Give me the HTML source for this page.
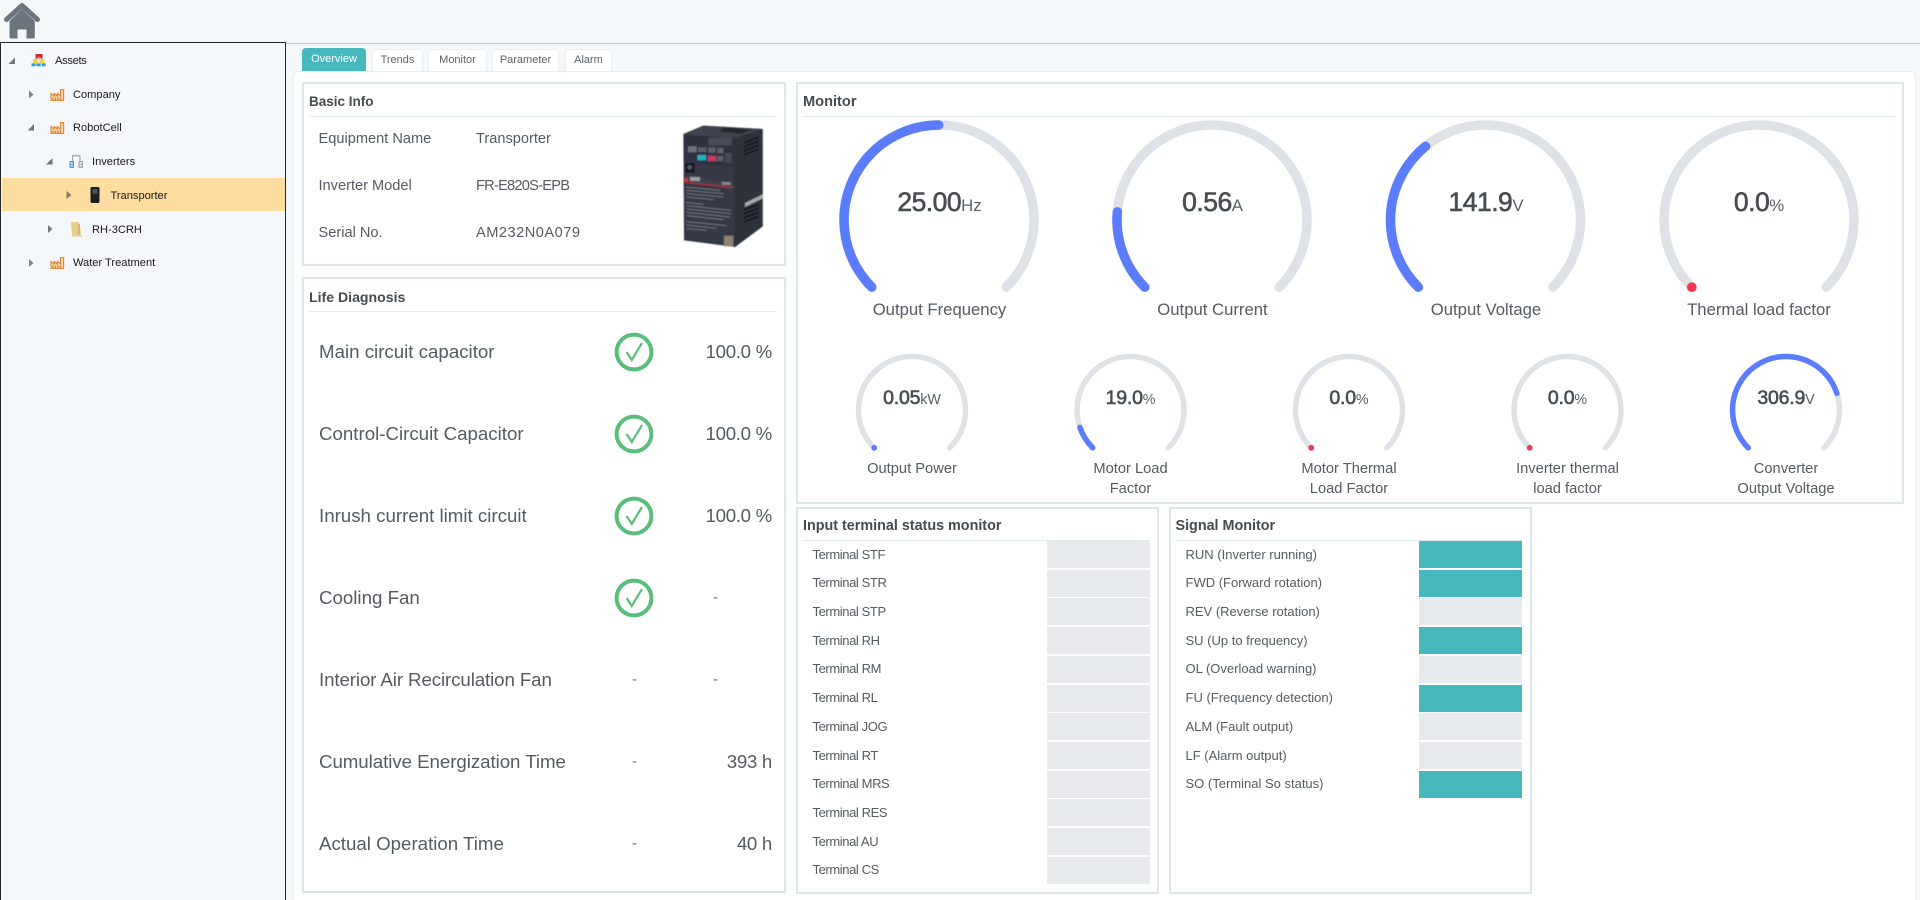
<!DOCTYPE html>
<html lang="en">
<head>
<meta charset="utf-8">
<title>Transporter Overview</title>
<style>
html,body{margin:0;padding:0;width:1920px;height:900px;overflow:hidden;background:#f5f8fb;font-family:"Liberation Sans","DejaVu Sans",sans-serif;color:#4f555b}
.a{position:absolute}
.t{position:absolute;white-space:nowrap;line-height:20px;height:20px}
.panel{position:absolute;box-sizing:border-box;border:2px solid #dce7ea;background:#fff}
.h{position:absolute;white-space:nowrap;font-size:14.1px;font-weight:bold;line-height:20px;height:20px;color:#464b50}
.ln{position:absolute;height:1.5px;background:#e2eaed}
.tree{font-size:11.1px;color:#1a1a1a}
.tab{position:absolute;box-sizing:border-box;top:49px;height:22px;background:#fff;border:1px solid #e8edf0;border-bottom:none;border-radius:4px 4px 0 0;font-size:11px;line-height:21px;text-align:center;color:#5b6167}
.tab.on{background:#48b8bf;border-color:#48b8bf;color:#fff;top:48px;height:23px}
.inf{font-size:14.6px;color:#555b62}
.ld{font-size:18.7px;color:#555b62}
.r{text-align:right;left:640px;width:132px;letter-spacing:-.3px}
.dash{font-size:15px;color:#666c72}
.tl{font-size:13px;color:#555b62}
.tm{letter-spacing:-.4px}
.c{position:absolute;height:27px;width:103px;background:#e7ebed}
.c.g{background:#48b8bf}
.v{position:absolute;width:240px;text-align:center;white-space:nowrap;color:#484d53}
.v b{font-weight:normal;-webkit-text-stroke:.6px #484d53}
.v i{font-style:normal;color:#5a6066}
.v.big{line-height:32px;height:32px;top:186px}
.v.big b{font-size:26.5px;letter-spacing:-.5px}
.v.big i{font-size:16.8px}
.v.sm{line-height:26px;height:26px;top:385px}
.v.sm b{font-size:19.5px;letter-spacing:-.2px}
.v.sm i{font-size:14.3px}
.gl{position:absolute;text-align:center;white-space:nowrap;color:#555b62}
.gl.big{font-size:16.7px;line-height:20px;width:260px;top:300px}
.gl.sm{font-size:14.7px;line-height:20px;width:200px;top:459px}
</style>
</head>
<body>

<!-- home icon -->
<svg class="a" style="left:0;top:0" width="48" height="42" viewBox="0 0 48 42">
<path d="M6.5 19.5 L22 5.5 L37.5 19.5" fill="none" stroke="#6c747d" stroke-width="5" stroke-linecap="round" stroke-linejoin="round"/>
<path d="M9.5 21 L22 9 L34.8 21 V37 Q34.8 38.5 33.3 38.5 H26.5 V29.5 H17.5 V38.5 H11 Q9.5 38.5 9.5 37 Z" fill="#6c747d"/>
</svg>

<!-- top rule -->
<div class="a" style="left:285px;top:42.5px;width:1635px;height:1px;background:#c6ccd1"></div>

<!-- tree -->
<div class="a" style="left:0;top:42px;width:286px;height:858px;box-sizing:border-box;border:1.5px solid #23272b;border-bottom:none;background:#f5f8fb"></div>
<div class="a" style="left:1.5px;top:178px;width:283px;height:33px;background:#fcdc9f"></div>

<svg class="a" style="left:0;top:42px" width="120" height="235" viewBox="0 42 120 235">
<!-- arrows -->
<path d="M15 57.5 V64 H8.5 Z" fill="#6f767c"/>
<path d="M29 90.5 L33.5 94.5 L29 98.5 Z" fill="#7b8288"/>
<path d="M34 124 V130.5 H27.5 Z" fill="#6f767c"/>
<path d="M52.5 158 V164.5 H46 Z" fill="#6f767c"/>
<path d="M66.5 191 L71.5 195 L66.5 199 Z" fill="#8b7a66"/>
<path d="M48 225 L52.5 229 L48 233 Z" fill="#6f7b88"/>
<path d="M29 259 L33.5 263 L29 267 Z" fill="#7b8288"/>
<!-- assets icon -->
<rect x="35.5" y="54" width="7" height="4.5" fill="#d7262e"/>
<path d="M39 57 L34 60 M39 57 L44 60" stroke="#9aa0a6" stroke-width="1" fill="none"/>
<rect x="33" y="59" width="5" height="4" fill="#f0d232"/>
<rect x="39.5" y="59" width="5" height="4" fill="#f0d232"/>
<rect x="31.5" y="63.3" width="4.2" height="3" fill="#2e9fd6"/>
<rect x="36.5" y="63.3" width="4.2" height="3" fill="#2e9fd6"/>
<rect x="41.5" y="63.3" width="4.2" height="3" fill="#2e9fd6"/>
</svg>

<!-- factory icons -->
<svg class="a" style="left:50px;top:89px" width="15" height="12" viewBox="0 0 15 12"><path d="M1 11.5 V4.5 L4.2 7 V4.5 L7.4 7 V4.5 L10.6 7 V.5 H13.6 V11.5 Z" fill="#f6d7ae" stroke="#df8a3d" stroke-width="1.2"/><path d="M3 8.5v2.5M5.5 8.5v2.5M8 8.5v2.5M10.5 8.5v2.5" stroke="#d97c2d" stroke-width="1.2"/></svg>
<svg class="a" style="left:50px;top:122px" width="15" height="12" viewBox="0 0 15 12"><path d="M1 11.5 V4.5 L4.2 7 V4.5 L7.4 7 V4.5 L10.6 7 V.5 H13.6 V11.5 Z" fill="#f6d7ae" stroke="#df8a3d" stroke-width="1.2"/><path d="M3 8.5v2.5M5.5 8.5v2.5M8 8.5v2.5M10.5 8.5v2.5" stroke="#d97c2d" stroke-width="1.2"/></svg>
<svg class="a" style="left:50px;top:257px" width="15" height="12" viewBox="0 0 15 12"><path d="M1 11.5 V4.5 L4.2 7 V4.5 L7.4 7 V4.5 L10.6 7 V.5 H13.6 V11.5 Z" fill="#f6d7ae" stroke="#df8a3d" stroke-width="1.2"/><path d="M3 8.5v2.5M5.5 8.5v2.5M8 8.5v2.5M10.5 8.5v2.5" stroke="#d97c2d" stroke-width="1.2"/></svg>
<!-- inverters icon -->
<svg class="a" style="left:68px;top:153px" width="16" height="16" viewBox="0 0 16 16"><path d="M4.5 8 V3 H12 V8 M5.5 3 V1.5 M8 3 V1.5 M10.5 3 V1.5" fill="none" stroke="#9aa2a9" stroke-width="1.1"/><rect x="1.5" y="8" width="4.5" height="7" fill="#5c94cf"/><rect x="2.7" y="9.5" width="2" height="1.4" fill="#fff"/><rect x="2.7" y="12" width="2" height="1.4" fill="#fff"/><rect x="10.5" y="8" width="4.5" height="7" fill="#a3aab0"/><rect x="11.7" y="9.5" width="2" height="1.4" fill="#fff"/><rect x="11.7" y="12" width="2" height="1.4" fill="#fff"/></svg>
<!-- transporter icon -->
<svg class="a" style="left:89px;top:186px" width="12" height="18" viewBox="0 0 12 18"><rect x="1.5" y="1" width="9" height="16" rx="1.5" fill="#1b1e22"/><rect x="3.5" y="3" width="5" height="5" fill="#4a5058"/></svg>
<!-- RH icon -->
<svg class="a" style="left:69px;top:221px" width="15" height="16" viewBox="0 0 15 16"><path d="M2 1 H9 L11 4 L12 14 L14 15.5 H3 Z" fill="#e9cd8a"/><path d="M9 1 L11 4 V14 L9 13 Z" fill="#d6b56c"/></svg>

<div class="t tree" style="left:55px;top:50.5px;letter-spacing:-.3px">Assets</div>
<div class="t tree" style="left:73px;top:84.5px">Company</div>
<div class="t tree" style="left:73px;top:117.5px">RobotCell</div>
<div class="t tree" style="left:92px;top:151.5px">Inverters</div>
<div class="t tree" style="left:110.5px;top:185.5px">Transporter</div>
<div class="t tree" style="left:92px;top:219.5px">RH-3CRH</div>
<div class="t tree" style="left:73px;top:252.5px">Water Treatment</div>

<!-- tabs -->
<div class="a" style="left:292.5px;top:71px;width:1623px;height:829px;background:#fff;border:1px solid #e6ecef;border-bottom:none;border-radius:5px 5px 0 0;box-sizing:border-box"></div>
<div class="tab on" style="left:302px;width:64px">Overview</div>
<div class="tab" style="left:372px;width:51px">Trends</div>
<div class="tab" style="left:428px;width:59px">Monitor</div>
<div class="tab" style="left:492px;width:67px">Parameter</div>
<div class="tab" style="left:565px;width:47px">Alarm</div>

<!-- Basic Info -->
<div class="panel" style="left:302px;top:82px;width:484px;height:184px"></div>
<div class="h" style="left:309px;top:92px;font-size:13.5px">Basic Info</div>
<div class="ln" style="left:309px;top:115.5px;width:468px"></div>
<div class="t inf" style="left:318.5px;top:129px">Equipment Name</div>
<div class="t inf" style="left:476px;top:129px">Transporter</div>
<div class="t inf" style="left:318.5px;top:175.5px">Inverter Model</div>
<div class="t inf" style="left:476px;top:175.5px;letter-spacing:-.75px">FR-E820S-EPB</div>
<div class="t inf" style="left:318.5px;top:222.5px">Serial No.</div>
<div class="t inf" style="left:476px;top:222.5px;letter-spacing:.5px">AM232N0A079</div>

<!-- inverter picture -->
<svg class="a" style="left:680px;top:123px" width="86.7" height="126.7" viewBox="1170 250 260 380">
<defs><filter id="bl" x="-5%" y="-5%" width="110%" height="110%"><feGaussianBlur stdDeviation="1.8"/></filter></defs>
<g filter="url(#bl)">
<path d="M1180 283 L1240 258 L1418 268 L1418 560 L1335 622 L1182 602 Z" fill="#363947"/>
<path d="M1180 283 L1240 258 L1418 268 L1330 296 Z" fill="#3f4250"/>
<path d="M1300 263 L1385 270 L1355 282 L1290 276 Z" fill="#25272f"/>
<path d="M1330 296 L1418 268 L1418 560 L1335 622 Z" fill="#2d303b"/>
<path d="M1182 285 L1330 298 L1330 382 L1182 365 Z" fill="#2f3240"/>
<rect x="1194" y="320" width="26" height="18" fill="#6e717a"/>
<rect x="1224" y="323" width="26" height="14" fill="#5a5d67"/>
<rect x="1255" y="323" width="22" height="16" fill="#5f626c"/>
<rect x="1282" y="325" width="18" height="16" fill="#5f626c"/>
<rect x="1255" y="295" width="70" height="22" fill="#4a4d58"/>
<rect x="1222" y="346" width="26" height="16" fill="#27b0c3"/>
<rect x="1253" y="348" width="26" height="17" fill="#c33a63"/>
<rect x="1282" y="349" width="18" height="16" fill="#5f626c"/>
<rect x="1305" y="340" width="20" height="30" fill="#474a55"/>
<rect x="1186" y="370" width="28" height="28" fill="#14161b"/>
<circle cx="1199" cy="383" r="7" fill="#585b65"/>
<path d="M1186 410 L1330 430 L1330 442 L1186 425 Z" fill="#3f4250"/>
<path d="M1186 428 L1330 444" stroke="#d0222a" stroke-width="3"/>
<path d="M1188 412 L1196 425 L1182 425 Z" fill="#e23a3a"/>
<rect x="1200" y="412" width="30" height="12" fill="#9a9ca3"/>
<rect x="1296" y="427" width="26" height="9" fill="#85878f"/>
<g stroke="#8b8e98" stroke-width="3" opacity=".7">
<path d="M1188 442 L1290 452"/><path d="M1190 452 L1300 462"/><path d="M1190 462 L1300 472"/>
<path d="M1190 472 L1270 480"/><path d="M1188 488 L1240 494"/><path d="M1190 498 L1322 512"/>
<path d="M1190 508 L1322 522"/><path d="M1190 518 L1320 532"/><path d="M1190 528 L1300 540"/>
<path d="M1188 546 L1310 558"/><path d="M1190 556 L1280 566"/><path d="M1190 566 L1250 572"/>
</g>
<rect x="1302" y="588" width="28" height="32" fill="#8d8370"/>
<g stroke="#14161b" stroke-width="5">
<path d="M1362 310 L1406 292"/><path d="M1362 322 L1406 304"/><path d="M1362 334 L1406 316"/><path d="M1362 346 L1406 328"/>
<path d="M1362 510 L1406 494"/><path d="M1362 522 L1406 506"/><path d="M1362 534 L1406 518"/><path d="M1362 546 L1406 530"/>
</g>
<path d="M1365 490 L1418 464 L1418 476 L1365 502 Z" fill="#a6a8ae"/>
</g>
</svg>

<!-- Life Diagnosis -->
<div class="panel" style="left:302px;top:277px;width:484px;height:616px"></div>
<div class="h" style="left:309px;top:287px">Life Diagnosis</div>
<div class="ln" style="left:309px;top:310.5px;width:468px"></div>

<div class="t ld" style="left:319px;top:341.5px">Main circuit capacitor</div>
<div class="t ld" style="left:319px;top:423.5px">Control-Circuit Capacitor</div>
<div class="t ld" style="left:319px;top:505.5px">Inrush current limit circuit</div>
<div class="t ld" style="left:319px;top:587.5px">Cooling Fan</div>
<div class="t ld" style="left:319px;top:669.5px;letter-spacing:-.1px">Interior Air Recirculation Fan</div>
<div class="t ld" style="left:319px;top:751.5px;letter-spacing:-.05px">Cumulative Energization Time</div>
<div class="t ld" style="left:319px;top:833.5px">Actual Operation Time</div>

<svg class="a" style="left:612px;top:330px" width="44" height="300" viewBox="0 0 44 300">
<g fill="none" stroke="#5bbd7c">
<g stroke-width="4"><circle cx="22" cy="22" r="17.4"/><circle cx="22" cy="104" r="17.4"/><circle cx="22" cy="186" r="17.4"/><circle cx="22" cy="268" r="17.4"/></g>
<g stroke-width="2.2"><path d="M14.5 22 L19.8 30 L30 13"/><path d="M14.5 104 L19.8 112 L30 95"/><path d="M14.5 186 L19.8 194 L30 177"/><path d="M14.5 268 L19.8 276 L30 259"/></g>
</g>
</svg>

<div class="t ld r" style="top:341.5px">100.0 %</div>
<div class="t ld r" style="top:423.5px">100.0 %</div>
<div class="t ld r" style="top:505.5px">100.0 %</div>
<div class="t dash" style="left:713px;top:587.5px">-</div>
<div class="t dash" style="left:713px;top:669.5px">-</div>
<div class="t dash" style="left:632px;top:669.5px">-</div>
<div class="t dash" style="left:632px;top:751.5px">-</div>
<div class="t ld r" style="top:751.5px">393 h</div>
<div class="t dash" style="left:632px;top:833.5px">-</div>
<div class="t ld r" style="top:833.5px">40 h</div>

<!-- Monitor -->
<div class="panel" style="left:796px;top:82px;width:1108px;height:422px"></div>
<div class="h" style="left:803px;top:92px;font-size:14.6px">Monitor</div>
<div class="ln" style="left:803px;top:115.5px;width:1093px"></div>

<svg class="a" style="left:0;top:0" width="1920" height="900" viewBox="0 0 1920 900">
<g fill="none" stroke-linecap="round">
<g stroke="#dee2e7" stroke-width="9.5">
<path d="M871.8 287.2 A95 95 0 1 1 1006.2 287.2"/>
<path d="M1144.8 287.2 A95 95 0 1 1 1279.2 287.2"/>
<path d="M1418.3 287.2 A95 95 0 1 1 1552.7 287.2"/>
<path d="M1691.8 287.2 A95 95 0 1 1 1826.2 287.2"/>
</g>
<g stroke="#5b7cfd" stroke-width="9.5">
<path pathLength="270" stroke-dasharray="135 1000" d="M871.8 287.2 A95 95 0 1 1 1006.2 287.2"/>
<path pathLength="270" stroke-dasharray="50 1000" d="M1144.8 287.2 A95 95 0 1 1 1279.2 287.2"/>
<path pathLength="270" stroke-dasharray="96 1000" d="M1418.3 287.2 A95 95 0 1 1 1552.7 287.2"/>
</g>
<g stroke="#dee2e7" stroke-width="5.5">
<path d="M874.2 447.8 A53.5 53.5 0 1 1 949.8 447.8"/>
<path d="M1092.7 447.8 A53.5 53.5 0 1 1 1168.3 447.8"/>
<path d="M1311.2 447.8 A53.5 53.5 0 1 1 1386.8 447.8"/>
<path d="M1529.7 447.8 A53.5 53.5 0 1 1 1605.3 447.8"/>
<path d="M1748.2 447.8 A53.5 53.5 0 1 1 1823.8 447.8"/>
</g>
<g stroke="#5b7cfd" stroke-width="5.5">
<path pathLength="270" stroke-dasharray="26 1000" d="M1092.7 447.8 A53.5 53.5 0 1 1 1168.3 447.8"/>
<path pathLength="270" stroke-dasharray="207 1000" d="M1748.2 447.8 A53.5 53.5 0 1 1 1823.8 447.8"/>
</g>
</g>
<circle cx="1691.8" cy="287.2" r="4.8" fill="#f4364c"/>
<circle cx="874.2" cy="447.8" r="2.9" fill="#5b7cfd"/>
<circle cx="1311.2" cy="447.8" r="2.9" fill="#f4364c"/>
<circle cx="1529.7" cy="447.8" r="2.9" fill="#f4364c"/>
</svg>

<div class="v big" style="left:819.5px"><b>25.00</b><i>Hz</i></div>
<div class="v big" style="left:1092.5px"><b>0.56</b><i>A</i></div>
<div class="v big" style="left:1366px"><b>141.9</b><i>V</i></div>
<div class="v big" style="left:1639px"><b>0.0</b><i>%</i></div>
<div class="gl big" style="left:809.5px">Output Frequency</div>
<div class="gl big" style="left:1082.5px">Output Current</div>
<div class="gl big" style="left:1356px">Output Voltage</div>
<div class="gl big" style="left:1629px">Thermal load factor</div>

<div class="v sm" style="left:792px"><b>0.05</b><i>kW</i></div>
<div class="v sm" style="left:1010.5px"><b>19.0</b><i>%</i></div>
<div class="v sm" style="left:1229px"><b>0.0</b><i>%</i></div>
<div class="v sm" style="left:1447.5px"><b>0.0</b><i>%</i></div>
<div class="v sm" style="left:1666px"><b>306.9</b><i>V</i></div>
<div class="gl sm" style="left:812px">Output Power</div>
<div class="gl sm" style="left:1030.5px">Motor Load<br>Factor</div>
<div class="gl sm" style="left:1249px">Motor Thermal<br>Load Factor</div>
<div class="gl sm" style="left:1467.5px">Inverter thermal<br>load factor</div>
<div class="gl sm" style="left:1686px">Converter<br>Output Voltage</div>

<!-- Input terminal -->
<div class="panel" style="left:796px;top:506.5px;width:362.5px;height:387px"></div>
<div class="h" style="left:803px;top:516px;font-size:14.35px">Input terminal status monitor</div>
<div class="ln" style="left:803px;top:539.5px;width:347px"></div>
<div class="t tl tm" style="left:812.5px;top:544.5px">Terminal STF</div><div class="c" style="left:1046.5px;top:541px"></div>
<div class="t tl tm" style="left:812.5px;top:573.3px">Terminal STR</div><div class="c" style="left:1046.5px;top:569.7px"></div>
<div class="t tl tm" style="left:812.5px;top:602px">Terminal STP</div><div class="c" style="left:1046.5px;top:598.4px"></div>
<div class="t tl tm" style="left:812.5px;top:630.7px">Terminal RH</div><div class="c" style="left:1046.5px;top:627.1px"></div>
<div class="t tl tm" style="left:812.5px;top:659.4px">Terminal RM</div><div class="c" style="left:1046.5px;top:655.8px"></div>
<div class="t tl tm" style="left:812.5px;top:688.1px">Terminal RL</div><div class="c" style="left:1046.5px;top:684.5px"></div>
<div class="t tl tm" style="left:812.5px;top:716.8px">Terminal JOG</div><div class="c" style="left:1046.5px;top:713.2px"></div>
<div class="t tl tm" style="left:812.5px;top:745.5px">Terminal RT</div><div class="c" style="left:1046.5px;top:741.9px"></div>
<div class="t tl tm" style="left:812.5px;top:774.2px">Terminal MRS</div><div class="c" style="left:1046.5px;top:770.6px"></div>
<div class="t tl tm" style="left:812.5px;top:802.9px">Terminal RES</div><div class="c" style="left:1046.5px;top:799.3px"></div>
<div class="t tl tm" style="left:812.5px;top:831.6px">Terminal AU</div><div class="c" style="left:1046.5px;top:828px"></div>
<div class="t tl tm" style="left:812.5px;top:860.3px">Terminal CS</div><div class="c" style="left:1046.5px;top:856.7px"></div>

<!-- Signal -->
<div class="panel" style="left:1168.5px;top:506.5px;width:363px;height:387px"></div>
<div class="h" style="left:1175.5px;top:516px;font-size:14.35px">Signal Monitor</div>
<div class="ln" style="left:1175.5px;top:539.5px;width:347px"></div>
<div class="t tl" style="left:1185.5px;top:544.5px">RUN (Inverter running)</div><div class="c g" style="left:1419px;top:541px"></div>
<div class="t tl" style="left:1185.5px;top:573.3px">FWD (Forward rotation)</div><div class="c g" style="left:1419px;top:569.7px"></div>
<div class="t tl" style="left:1185.5px;top:602px">REV (Reverse rotation)</div><div class="c" style="left:1419px;top:598.4px"></div>
<div class="t tl" style="left:1185.5px;top:630.7px">SU (Up to frequency)</div><div class="c g" style="left:1419px;top:627.1px"></div>
<div class="t tl" style="left:1185.5px;top:659.4px">OL (Overload warning)</div><div class="c" style="left:1419px;top:655.8px"></div>
<div class="t tl" style="left:1185.5px;top:688.1px">FU (Frequency detection)</div><div class="c g" style="left:1419px;top:684.5px"></div>
<div class="t tl" style="left:1185.5px;top:716.8px">ALM (Fault output)</div><div class="c" style="left:1419px;top:713.2px"></div>
<div class="t tl" style="left:1185.5px;top:745.5px">LF (Alarm output)</div><div class="c" style="left:1419px;top:741.9px"></div>
<div class="t tl" style="left:1185.5px;top:774.2px">SO (Terminal So status)</div><div class="c g" style="left:1419px;top:770.6px"></div>

</body>
</html>
